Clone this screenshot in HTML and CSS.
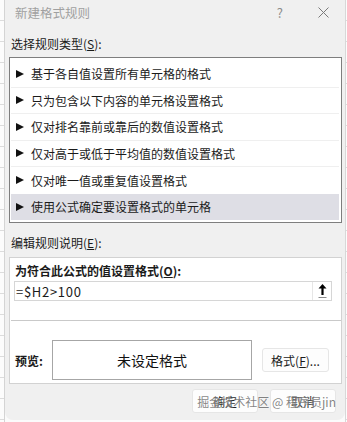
FILE: index.html
```html
<!DOCTYPE html>
<html lang="zh-CN">
<head>
<meta charset="UTF-8" />
<title>新建格式规则</title>
<link rel="stylesheet" href="styles.css">
</head>
<body>
  <div class="sheet sheet-left"></div>
  <div class="dialog" role="dialog" aria-label="新建格式规则">
    <div class="titlebar">
      <span class="title">新建格式规则</span>
      <span class="help">?</span>
      <span class="close" aria-label="关闭">
        <svg width="11" height="11" viewBox="0 0 11 11"><path d="M0.5 0.5 L10.5 10.5 M10.5 0.5 L0.5 10.5" stroke="#7a7a7a" stroke-width="1" fill="none"/></svg>
      </span>
    </div>

    <div class="label">选择规则类型(<u>S</u>):</div>
    <ul class="rule-list">
      <li><i class="tri"></i>基于各自值设置所有单元格的格式</li>
      <li><i class="tri"></i>只为包含以下内容的单元格设置格式</li>
      <li><i class="tri"></i>仅对排名靠前或靠后的数值设置格式</li>
      <li><i class="tri"></i>仅对高于或低于平均值的数值设置格式</li>
      <li><i class="tri"></i>仅对唯一值或重复值设置格式</li>
      <li class="selected"><i class="tri"></i>使用公式确定要设置格式的单元格</li>
    </ul>

    <div class="label label-edit">编辑规则说明(<u>E</u>):</div>
    <div class="panel">
      <div class="panel-title">为符合此公式的值设置格式(<u>O</u>):</div>
      <div class="formula">
        <span class="formula-text">=$H2&gt;100</span>
        <span class="ref-btn">
          <svg width="9" height="16" viewBox="0 0 9 16"><path d="M4.5 1 L8.5 5.5 L5.6 5.5 L5.6 12 L3.4 12 L3.4 5.5 L0.5 5.5 Z" fill="#000"/><path d="M0.5 14.5 H8.5" stroke="#8a8a8a" stroke-width="1"/></svg>
        </span>
      </div>
      <div class="divider"></div>
      <div class="preview-row">
        <span class="preview-label">预览:</span>
        <div class="preview-box">未设定格式</div>
        <button class="btn btn-format">格式(<u>F</u>)...</button>
      </div>
    </div>

    <div class="footer">
      <button class="btn">确定</button>
      <button class="btn">取消</button>
      <span class="watermark">掘金技术社区 @ 程序员jin</span>
    </div>
  </div>
  <div class="sheet sheet-right"></div>
</body>
</html>
```

FILE: styles.css
```css
* {
  box-sizing: border-box;
}
body {
  margin: 0;
  height: 422px;
  overflow: hidden;
  display: flex;
  background: #fbfbfb;
  font-family: "Noto Sans CJK SC", "Microsoft YaHei", sans-serif;
  font-size: 12px;
  color: #1b1b1b;
}
u {
  text-decoration: underline;
  text-underline-offset: 1px;
}

/* spreadsheet peeking out behind the dialog */
.sheet {
  background-color: #fcfcfc;
  background-image: repeating-linear-gradient(to bottom, transparent 0, transparent 20px, #dcdcdc 20px, #dcdcdc 21px);
}
.sheet-left {
  width: 5px;
  border-right: 1px solid #d4d4d4;
}
.sheet-right {
  flex: 1;
  border-left: 1px solid #d8d8d8;
}

.dialog {
  position: relative;
  width: 340px;
  height: 420px;
  background: #f0f0f0;
  border-radius: 0 0 8px 8px;
  display: flex;
  flex-direction: column;
  padding: 0 3px 0 4px;
}

.titlebar {
  height: 24px;
  display: flex;
  align-items: center;
  padding-left: 6px;
  color: #a0a0a0;
}
.title {
  flex: 1;
  font-size: 12.5px;
}
.help {
  font-size: 13px;
  color: #8c8c8c;
  margin-right: 35px;
}
.close {
  display: flex;
  margin-right: 13px;
}

.label {
  height: 16px;
  line-height: 16px;
  margin-top: 12px;
  padding-left: 2px;
}

.rule-list {
  list-style: none;
  margin: 5px 0 0 0;
  padding: 3px 2px 2px 1px;
  height: 166px;
  background: #fff;
  border: 1px solid #7e7e7e;
}
.rule-list li {
  height: 26.5px;
  display: flex;
  align-items: center;
  padding-left: 5px;
  border-bottom: 1px solid #efefef;
}
.rule-list li:nth-last-child(2),
.rule-list li.selected {
  border-bottom: none;
}
.rule-list li.selected {
  background: #dedee5;
}
.tri {
  width: 0;
  height: 0;
  border-top: 4.5px solid transparent;
  border-bottom: 4.5px solid transparent;
  border-left: 8px solid #111;
  margin-right: 7px;
}

.label-edit {
  margin-top: 12px;
}

.panel {
  margin-top: 6px;
  height: 127px;
  background: #fff;
  border: 1px solid #d2d2d2;
  padding: 5px 0 0 0;
}
.panel-title {
  height: 16px;
  line-height: 16px;
  font-weight: bold;
  padding-left: 5px;
}
.formula {
  margin: 2px 9px 0 4px;
  height: 20px;
  border: 1px solid #d6d6d6;
  display: flex;
  align-items: center;
}
.formula-text {
  flex: 1;
  padding-left: 1px;
  font-size: 13px;
  letter-spacing: 0.7px;
}
.ref-btn {
  width: 19px;
  height: 100%;
  border-left: 1px solid #e6e6e6;
  display: flex;
  align-items: center;
  justify-content: center;
}

.divider {
  height: 1px;
  margin: 19px 0 0 1px;
  background: #c9c9c9;
}

.preview-row {
  display: flex;
  align-items: center;
  margin-top: 19px;
  padding-left: 5px;
}
.preview-label {
  width: 37px;
  font-weight: bold;
}
.preview-box {
  width: 200px;
  height: 40px;
  border: 1px solid #a6a6a6;
  display: flex;
  align-items: center;
  justify-content: center;
  font-size: 14px;
  color: #111;
}

.btn {
  font-family: inherit;
  font-size: 12px;
  color: #1b1b1b;
  background: #fdfdfd;
  border: 1px solid #e6e6e6;
  border-radius: 3px;
  width: 66px;
  height: 24px;
  padding: 0;
}
.btn-format {
  width: 67px;
  margin-left: 10px;
}

.footer {
  position: relative;
  display: flex;
  justify-content: flex-end;
  gap: 12px;
  margin-top: 5px;
  padding-right: 6px;
}
.watermark {
  position: absolute;
  right: 6px;
  top: 4px;
  font-size: 12px;
  color: rgba(90, 90, 90, 0.75);
  text-shadow: 0 0 2px #fff;
  white-space: nowrap;
}
```
